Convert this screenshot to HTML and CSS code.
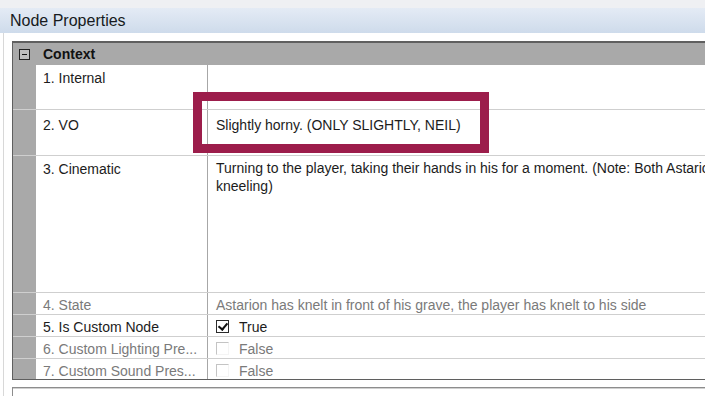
FILE: index.html
```html
<!DOCTYPE html>
<html>
<head lang="en">
    <meta charset="UTF-8">
    <title>Node Properties</title>
    <link rel="stylesheet" href="styles.css">
</head>
<body>
<div class="caption"></div>
<div class="header">Node Properties</div>
<div class="panel">
    <div class="grid">
        <div class="category">
            <div class="gutter"><span class="toggle"></span></div>
            <div class="catName">Context</div>
        </div>
        <div class="row tall1">
            <div class="gutter"></div>
            <div class="name">1. Internal</div>
            <div class="value"></div>
        </div>
        <div class="row tall2">
            <div class="gutter"></div>
            <div class="name">2. VO</div>
            <div class="value">Slightly horny. (ONLY SLIGHTLY, NEIL)</div>
        </div>
        <div class="row tall3">
            <div class="gutter"></div>
            <div class="name">3. Cinematic</div>
            <div class="value">Turning to the player, taking their hands in his for a moment. (Note: Both Astarion and the player are kneeling)</div>
        </div>
        <div class="row single readonly">
            <div class="gutter"></div>
            <div class="name">4. State</div>
            <div class="value">Astarion has knelt in front of his grave, the player has knelt to his side</div>
        </div>
        <div class="row single">
            <div class="gutter"></div>
            <div class="name">5. Is Custom Node</div>
            <div class="value"><span class="check on"></span>True</div>
        </div>
        <div class="row single readonly">
            <div class="gutter"></div>
            <div class="name">6. Custom Lighting Pre...</div>
            <div class="value"><span class="check"></span>False</div>
        </div>
        <div class="row single readonly last">
            <div class="gutter"></div>
            <div class="name">7. Custom Sound Pres...</div>
            <div class="value"><span class="check"></span>False</div>
        </div>
    </div>
    <div class="description"></div>
</div>
<div class="highlight"></div>
</body>
</html>
```

FILE: styles.css
```css
* {
    margin: 0;
    padding: 0;
    box-sizing: border-box;
}

body {
    width: 705px;
    height: 396px;
    overflow: hidden;
    position: relative;
    background-color: #fff;
    font-family: "Liberation Sans", Arial, sans-serif;
    font-size: 14px;
    color: #1c1c1c;
}

.caption {
    height: 8px;
    background-color: #eff0f3;
}

.header {
    height: 25px;
    padding-left: 10px;
    line-height: 25px;
    font-size: 16px;
    color: #161a20;
    background: linear-gradient(#e4ebf5, #cedbeb);
}

.panel {
    margin-left: 3px;
    padding: 8px 0 0 8px;
    border-left: 1px solid #d8d8d8;
}

.grid {
    width: 960px;
    border: 1px solid #5f5f5f;
    border-top-width: 2px;
    background-color: #fff;
}

.category {
    display: flex;
    height: 22px;
    background-color: #a9a9a9;
}

.gutter {
    flex: none;
    width: 23px;
    background-color: #a9a9a9;
}

.category .gutter {
    display: flex;
    align-items: center;
    justify-content: center;
}

.toggle {
    position: relative;
    width: 11px;
    height: 11px;
    border: 1px solid #222;
    background-color: #bdbdbd;
}

.toggle::after {
    content: "";
    position: absolute;
    left: 2px;
    top: 4px;
    width: 5px;
    height: 1px;
    background-color: #111;
}

.catName {
    padding-left: 7px;
    line-height: 22px;
    font-weight: bold;
    color: #111;
}

.row {
    display: flex;
    border-bottom: 1px solid #cfcfcf;
}

.row.last {
    border-bottom: none;
}

.name {
    flex: none;
    width: 172px;
    padding: 4px 0 0 7px;
    line-height: 18px;
    border-right: 1px solid #a7a7a7;
    white-space: nowrap;
    overflow: hidden;
}

.value {
    flex: 1;
    padding: 4px 0 0 8px;
    line-height: 18px;
    display: flex;
    align-items: flex-start;
}

.tall1 { height: 45px; }
.tall2 { height: 46px; }
.tall2 .name, .tall2 .value { padding-top: 6px; }
.tall3 { height: 137px; }
.tall3 .value { width: 680px; flex: none; display: block; padding-top: 3px; }

.row.single {
    height: 22px;
}

.row.single .name,
.row.single .value {
    padding-top: 3px;
}

.row.last {
    height: 20px;
}

.readonly .name,
.readonly .value {
    color: #7a7a7a;
}

.check {
    flex: none;
    position: relative;
    width: 13px;
    height: 13px;
    margin: 2px 10px 0 0;
    border: 1px solid #c4c4c4;
    border-right-color: #f4f4f4;
    border-bottom-color: #f4f4f4;
    background-color: #fff;
}

.check.on {
    border: 1px solid #2b2b2b;
}

.check.on::after {
    content: "";
    position: absolute;
    left: 3px;
    top: 0;
    width: 4px;
    height: 7px;
    border-right: 2px solid #111;
    border-bottom: 2px solid #111;
    transform: rotate(40deg);
}

.description {
    height: 20px;
    margin-top: 7px;
    border: 1px solid #8d8d8d;
    border-right: none;
    box-shadow: inset 0 1px 0 #d0d0d0;
}

.highlight {
    position: absolute;
    left: 193px;
    top: 92px;
    width: 296px;
    height: 61px;
    border: 9px solid #9c1d4b;
}
```
